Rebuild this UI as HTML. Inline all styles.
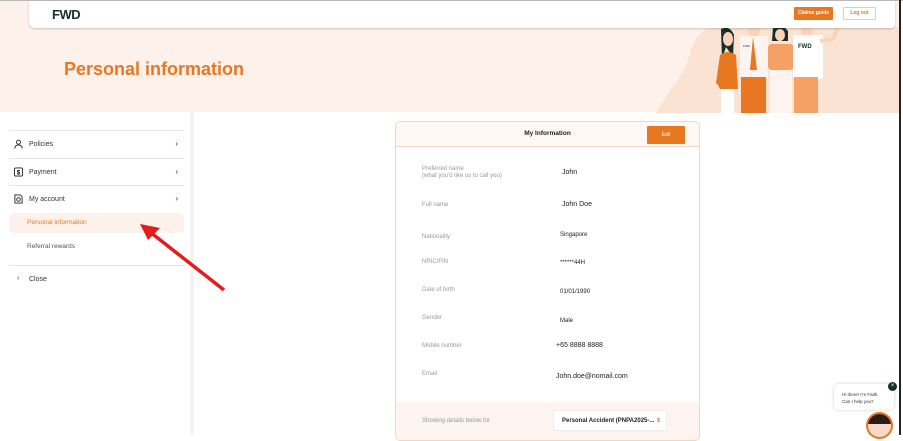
<!DOCTYPE html>
<html><head><style>
*{margin:0;padding:0;box-sizing:border-box}
body{width:903px;height:435px;overflow:hidden;background:#fff;font-family:"Liberation Sans",sans-serif;position:relative}
.banner{position:absolute;left:0;top:0;width:900px;height:112px;background:#fdf1ec}
.hdr{position:absolute;left:29px;top:1px;width:866px;height:27px;background:#fff;border-radius:0 0 4px 6px;box-shadow:0 1px 2px rgba(0,0,0,.2)}
.topline{position:absolute;left:0;top:0;width:903px;height:1px;background:#bbb}
.logo{position:absolute;left:52px;top:7px;font-weight:bold;font-size:13px;color:#183028;letter-spacing:-.5px}
.btn1{position:absolute;left:794px;top:7px;width:39px;height:13px;background:#e87722;color:#fff;font-size:5px;font-weight:bold;text-align:center;line-height:13px;border-radius:1px}
.btn2{position:absolute;left:843px;top:7px;width:33px;height:13px;border:1px solid #f3c6a4;color:#e87722;font-size:5px;font-weight:bold;text-align:center;line-height:11px;border-radius:1px}
h1{position:absolute;left:64px;top:59px;font-size:18px;color:#e87722;font-weight:bold}
.side{position:absolute;left:0;top:112px;width:190px;height:323px;background:#fff}
.gap{position:absolute;left:190px;top:112px;width:4px;height:323px;background:#f2f2f2}
.item{position:absolute;left:9px;width:175px;height:28px;border-top:1px solid #e5e5e5;font-size:7px;color:#333}
.item span.t{position:absolute;left:20px;top:10px}
.item span.c{position:absolute;right:6px;top:8px;font-size:8px}
.ico{position:absolute;left:5px;top:8px;width:9px;height:10px}
.sub{position:absolute;left:9px;width:175px;height:20px;font-size:6.5px;line-height:20px;padding-left:18px;color:#555}
.card{position:absolute;left:395px;top:121px;width:305px;height:320px;border:1px solid #f5d5bf;border-radius:5px;background:#fff;overflow:hidden}
.chd{height:25px;background:#fef8f4;border-bottom:1px solid #f5d5bf;text-align:center;font-size:6.5px;font-weight:bold;line-height:24px;color:#222}
.edit{position:absolute;left:251px;top:4px;width:38px;height:18px;background:#e87722;color:#fff;font-size:5px;text-align:center;line-height:18px;border-radius:1px}
.l{position:absolute;left:26px;font-size:6px;color:#999;line-height:6.5px}
.v{position:absolute;font-size:7px;color:#222}
.foot{position:absolute;left:0;top:280px;width:305px;height:45px;background:#fdf4ef}
.sel{position:absolute;left:157px;top:288px;width:114px;height:21px;background:#fff;border:1px solid #eee;border-radius:2px;font-size:6px;font-weight:bold;line-height:20px;padding-left:8px;color:#222}
.bub{position:absolute;left:834px;top:384px;width:60px;height:26px;background:#fff;border-radius:5px;box-shadow:0 0 3px rgba(0,0,0,.2);font-size:4.5px;color:#333;padding:7px 0 0 8px;line-height:7px}
</style></head><body>
<div class="banner"></div>
<svg style="position:absolute;left:650px;top:27px" width="250" height="86" viewBox="0 0 250 86">
<path d="M6 86 C20 60 35 50 40 25 C45 8 55 0 70 0 L250 0 L250 86Z" fill="#fbe3d4"/>
<!-- woman 1 -->
<path d="M71 2 Q80 -2 84 8 L83 30 L76 20 L72 32Z" fill="#183028"/>
<ellipse cx="78" cy="12" rx="5" ry="7" fill="#fbd3b8"/>
<path d="M66 56 L70 28 Q78 22 86 28 L88 62 L70 62 L68 58Z" fill="#e87722"/>
<rect x="71" y="62" width="13" height="24" fill="#fff"/>
<!-- man 2 -->
<ellipse cx="104" cy="4" rx="6" ry="6" fill="#fbd3b8"/>
<rect x="90" y="9" width="28" height="42" fill="#fdf4ef"/>
<text x="93" y="20" font-size="3" fill="#183028" font-family="Liberation Sans">FWD</text>
<path d="M103 10 L107 43 L100 43Z" fill="#e87722"/>
<rect x="91" y="50" width="25" height="36" fill="#e87722"/>
<!-- woman 3 -->
<path d="M123 0 Q132 -4 138 4 L138 14 L122 14Z" fill="#183028"/>
<ellipse cx="130" cy="8" rx="5" ry="6" fill="#fbd3b8"/>
<rect x="118" y="17" width="26" height="26" rx="4" fill="#f5a165"/>
<rect x="120" y="43" width="22" height="43" fill="#fdf4ef"/>
<!-- man 4 -->
<ellipse cx="157" cy="4" rx="6" ry="6" fill="#fbd3b8"/>
<rect x="143" y="8" width="30" height="44" fill="#fff"/>
<text x="148" y="21" font-size="6" font-weight="bold" fill="#183028" font-family="Liberation Sans">FWD</text>
<rect x="144" y="50" width="24" height="36" fill="#f5a165"/>
<path d="M170 14 L183 12 L188 0" stroke="#fbd3b8" stroke-width="4" fill="none"/>
</svg>
<div class="topline"></div>
<div class="hdr"></div>
<div class="logo">FWD</div>
<div class="btn1">Claims guide</div>
<div class="btn2">Log out</div>
<h1>Personal information</h1>
<div class="side"></div><div class="gap"></div>
<div class="item" style="top:130px"><svg class="ico" viewBox="0 0 10 10"><circle cx="5" cy="3" r="2.2" fill="none" stroke="#222" stroke-width="1"/><path d="M1 10 Q1 6 5 6 Q9 6 9 10" fill="none" stroke="#222" stroke-width="1"/></svg><span class="t">Policies</span><span class="c">›</span></div>
<div class="item" style="top:158px"><svg class="ico" viewBox="0 0 10 10"><rect x=".5" y=".5" width="9" height="9" rx="1.5" fill="none" stroke="#222"/><text x="3" y="8" font-size="7" font-weight="bold" font-family="Liberation Sans">$</text></svg><span class="t">Payment</span><span class="c">›</span></div>
<div class="item" style="top:185px"><svg class="ico" viewBox="0 0 10 10"><path d="M1 .5 H7 L9 2.5 V9.5 H1Z" fill="none" stroke="#222"/><circle cx="5" cy="5.5" r="2" fill="none" stroke="#222"/></svg><span class="t">My account</span><span class="c">›</span></div>
<div class="sub" style="top:213px;background:#fdf1ec;border-radius:5px;color:#e87722">Personal information</div>
<div class="sub" style="top:237px">Referral rewards</div>
<div class="item" style="top:265px;border-top:1px solid #e5e5e5"><span class="t" style="left:8px;top:9px">‹</span><span class="t" style="top:10px">Close</span></div>
<svg style="position:absolute;left:136px;top:218px" width="92" height="76"><path d="M88 72 L14 14" stroke="#e31c1c" stroke-width="3.5"/><path d="M4 6 L24 10 L12 22Z" fill="#e31c1c"/></svg>
<div class="card">
<div class="chd">My Information</div>
<div class="edit">Edit</div>
<div class="l" style="top:44px">Preferred name<br>(what you'd like us to call you)</div><div class="v" style="left:166px;top:47px">John</div>
<div class="l" style="top:80px">Full name</div><div class="v" style="left:166px;top:79px">John Doe</div>
<div class="l" style="top:112px">Nationality</div><div class="v" style="left:164px;top:110px;font-size:6px">Singapore</div>
<div class="l" style="top:137px">NRIC/FIN</div><div class="v" style="left:164px;top:138px;font-size:6px">******44H</div>
<div class="l" style="top:165px">Date of birth</div><div class="v" style="left:164px;top:167px;font-size:6px">01/01/1990</div>
<div class="l" style="top:193px">Gender</div><div class="v" style="left:164px;top:196px;font-size:6px">Male</div>
<div class="l" style="top:221px">Mobile number</div><div class="v" style="left:160px;top:220px">+65 8888 8888</div>
<div class="l" style="top:249px">Email</div><div class="v" style="left:160px;top:251px">John.doe@nomail.com</div>
<div class="foot"></div>
<div class="l" style="top:296px">Showing details below for</div>
<div class="sel">Personal Accident (PNPA2025-... <span style="color:#e87722">⇕</span></div>
</div>
<div style="position:absolute;left:899px;top:0;width:2px;height:435px;background:#222"></div>
<div class="bub">Hi there! I'm Faith.<br>Can I help you?</div>
<div style="position:absolute;left:888px;top:382px;width:9px;height:9px;border-radius:50%;background:#183028;color:#fff;font-size:6px;text-align:center;line-height:9px">×</div>
<div style="position:absolute;left:866px;top:412px;width:27px;height:27px;border-radius:50%;border:2px solid #e87722;background:#f7d9c8;overflow:hidden"><div style="width:27px;height:10px;background:#2a1a1a"></div></div>
</body></html>
